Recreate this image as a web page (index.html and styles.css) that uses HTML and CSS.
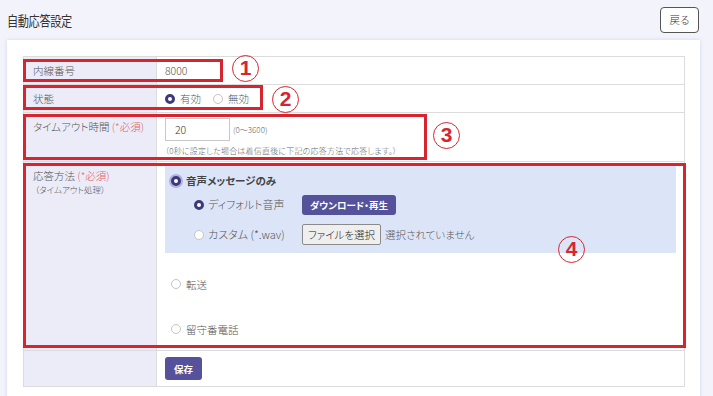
FILE: index.html
```html
<!DOCTYPE html>
<html>
<head>
    <title>自動応答設定</title>
    <meta charset="UTF-8">
    <link rel="stylesheet" href="styles.css">
</head>
<body>
    <div class="page-header">
        <h1 class="page-title">自動応答設定</h1>
        <button class="back-button">戻る</button>
    </div>

    <div class="card">
        <div class="form-table">
            <div class="form-row">
                <div class="form-label">内線番号</div>
                <div class="form-value">8000</div>
            </div>
            <div class="form-row">
                <div class="form-label">状態</div>
                <div class="form-value inline-radios">
                    <label class="radio-label"><input type="radio" name="status" class="radio" checked>有効</label>
                    <label class="radio-label"><input type="radio" name="status" class="radio">無効</label>
                </div>
            </div>
            <div class="form-row">
                <div class="form-label">タイムアウト時間 <span class="required">(*必須)</span></div>
                <div class="form-value">
                    <div class="timeout-line">
                        <input type="text" class="text-input" value="20">
                        <span class="range-hint">(0～3600)</span>
                    </div>
                    <div class="note">（0秒に設定した場合は着信直後に下記の応答方法で応答します。）</div>
                </div>
            </div>
            <div class="form-row">
                <div class="form-label">
                    応答方法 <span class="required">(*必須)</span>
                    <div class="sub-label">（タイムアウト処理）</div>
                </div>
                <div class="form-value">
                    <div class="method-panel">
                        <label class="radio-label strong"><input type="radio" name="method" class="radio focus" checked>音声メッセージのみ</label>
                        <div class="sub-option first">
                            <label class="radio-label sub-name"><input type="radio" name="voice" class="radio" checked>ディフォルト音声</label>
                            <button class="primary-button">ダウンロード・再生</button>
                        </div>
                        <div class="sub-option">
                            <label class="radio-label sub-name"><input type="radio" name="voice" class="radio">カスタム (*.wav)</label>
                            <button class="file-button">ファイルを選択</button>
                            <span class="file-name">選択されていません</span>
                        </div>
                    </div>
                    <label class="radio-label plain-option transfer"><input type="radio" name="method" class="radio">転送</label>
                    <label class="radio-label plain-option voicemail"><input type="radio" name="method" class="radio">留守番電話</label>
                </div>
            </div>
            <div class="form-row">
                <div class="form-label"></div>
                <div class="form-value save-cell">
                    <button class="primary-button save-button">保存</button>
                </div>
            </div>
        </div>
    </div>

    <div class="mark mark-1"></div>
    <div class="mark mark-2"></div>
    <div class="mark mark-3"></div>
    <div class="mark mark-4"></div>
    <div class="num num-1">1</div>
    <div class="num num-2">2</div>
    <div class="num num-3">3</div>
    <div class="num num-4">4</div>
</body>
</html>
```

FILE: styles.css
```css
body {
    margin: 0;
    position: relative;
    background: #f3f4fb;
    font-family: "Noto Sans CJK JP", "Noto Sans", sans-serif;
    font-feature-settings: "palt";
    font-weight: 300;
    color: #555;
    font-size: 10.5px;
}

.page-header {
    display: flex;
    justify-content: space-between;
    align-items: center;
    height: 40px;
    padding: 0 14px 0 7px;
}

.page-title {
    margin: 0;
    font-size: 14px;
    font-weight: normal;
    color: #333;
    letter-spacing: -0.5px;
    transform: scaleX(0.8);
    transform-origin: left center;
}

.back-button {
    width: 39px;
    height: 26px;
    margin-top: -1px;
    padding: 0;
    background: #fff;
    border: 1px solid #555;
    border-radius: 4px;
    font-family: inherit;
    font-feature-settings: "palt";
    font-weight: 300;
    font-size: 10.5px;
    color: #333;
}

.card {
    margin: 0 13px 0 7px;
    padding: 16px 15px 16px 16px;
    background: #fff;
    box-shadow: 0 0 4px rgba(120, 125, 190, 0.25);
}

.form-table {
    border: 1px solid #dcdcdc;
}

.form-row {
    display: flex;
    border-bottom: 1px solid #dcdcdc;
}

.form-row:last-child {
    border-bottom: none;
}

.form-label {
    width: 123px;
    flex-shrink: 0;
    padding: 6px 0 6px 9px;
    line-height: 15px;
    background: #ececf8;
    border-right: 1px solid #dcdcdc;
    color: #555;
}

.required {
    color: #e0646b;
}

.sub-label {
    margin-top: 0;
    padding-left: 2px;
    font-size: 8.5px;
    line-height: 13px;
}

.form-value {
    flex: 1;
    padding: 5px 8px;
    line-height: 17px;
}

.inline-radios {
    display: flex;
    gap: 12px;
}

.radio-label {
    display: inline-flex;
    align-items: center;
    gap: 5px;
}

.radio {
    appearance: none;
    width: 10px;
    height: 10px;
    margin: 0;
    border: 1px solid #c4c4c4;
    border-radius: 50%;
    background: #fff;
}

.radio:checked {
    border: 3px solid #3d3a7c;
}

.radio.focus {
    box-shadow: 0 0 0 2px #b4b0e0;
}

.timeout-line {
    display: flex;
    align-items: center;
    gap: 3px;
}

.text-input {
    width: 65px;
    height: 23px;
    box-sizing: border-box;
    padding: 0 0 0 9px;
    border: 1px solid #c8c8c8;
    font-family: inherit;
    font-weight: 300;
    font-size: 10.5px;
    color: #333;
}

.range-hint {
    font-size: 8px;
    color: #666;
}

.note {
    margin-top: 4px;
    font-size: 8px;
    line-height: 11px;
    letter-spacing: 0.2px;
    color: #666;
}

.method-panel {
    display: flex;
    flex-direction: column;
    align-items: flex-start;
    margin-top: -1px;
    padding: 8px 6px 8px 6px;
    background: #dce5f8;
}

.strong {
    font-weight: bold;
    line-height: 14px;
    color: #444;
}

.sub-option {
    display: flex;
    align-items: center;
    height: 21px;
    margin-top: 9px;
    padding-left: 23px;
}

.sub-option.first {
    margin-top: 6px;
}

.sub-name {
    width: 108px;
    gap: 4px;
    font-size: 11px;
    color: #555;
}

.primary-button {
    height: 20px;
    padding: 0 8px;
    background: #55519b;
    border: none;
    border-radius: 3px;
    color: #fff;
    font-family: inherit;
    font-feature-settings: "palt";
    font-size: 9.5px;
    font-weight: bold;
}

.file-button {
    height: 21px;
    padding: 0 5px;
    background: #efefef;
    border: 1px solid #8a8a8a;
    border-radius: 2px;
    font-family: inherit;
    font-feature-settings: "palt";
    font-weight: 300;
    font-size: 10.5px;
    color: #222;
}

.file-name {
    margin-left: 4px;
    color: #555;
}

.plain-option {
    display: flex;
    height: 14px;
    padding-left: 6px;
}

.transfer {
    margin-top: 24px;
}

.voicemail {
    margin-top: 31px;
    margin-bottom: 9px;
}

.save-cell {
    padding: 6px 8px;
}

.save-button {
    height: 23px;
    padding: 0 9px;
}

.mark {
    position: absolute;
    left: 23px;
    box-sizing: border-box;
    border: 3px solid #d7252f;
}

.mark-1 { top: 59px; width: 200px; height: 23px; }
.mark-2 { top: 85px; width: 240px; height: 25px; }
.mark-3 { top: 114px; width: 404px; height: 46px; }
.mark-4 { top: 163px; width: 663px; height: 185px; }

.num {
    position: absolute;
    width: 27px;
    height: 27px;
    box-sizing: border-box;
    border: 1.5px solid #d7252f;
    border-radius: 50%;
    color: #d7252f;
    font-family: "Liberation Sans", Arial, sans-serif;
    font-size: 21px;
    font-weight: bold;
    line-height: 24px;
    text-align: center;
}

.num-1 { left: 232px; top: 55px; }
.num-2 { left: 272px; top: 86px; }
.num-3 { left: 433px; top: 122px; }
.num-4 { left: 558px; top: 236px; }
```
